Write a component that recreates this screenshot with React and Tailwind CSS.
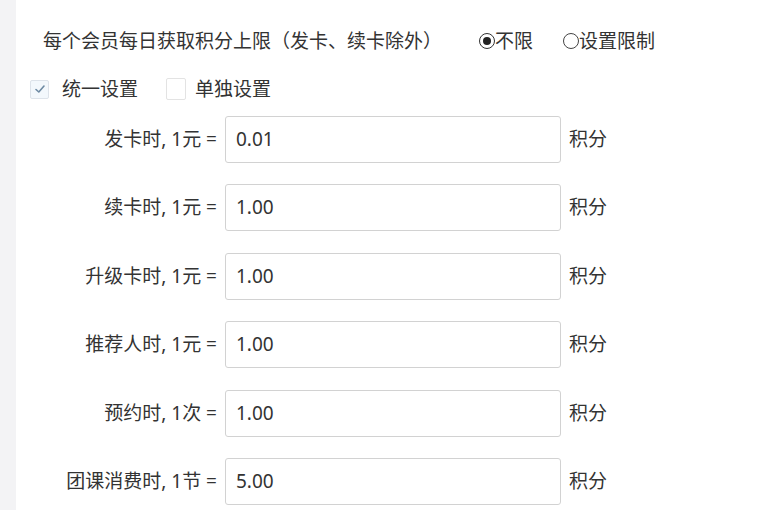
import React from "react";

const rows = [
  ["发卡时, 1元 =", "0.01"],
  ["续卡时, 1元 =", "1.00"],
  ["升级卡时, 1元 =", "1.00"],
  ["推荐人时, 1元 =", "1.00"],
  ["预约时, 1次 =", "1.00"],
  ["团课消费时, 1节 =", "5.00"],
];

export default function App() {
  return (
    <div
      className="flex w-[768px] h-[510px] overflow-hidden bg-white text-[#333] text-[19px] leading-none"
      style={{ fontFamily: '"Noto Sans", "Noto Sans CJK SC", sans-serif' }}
    >
      <div className="w-4 shrink-0 bg-[#f3f3f5]" />
      <div className="flex flex-col pl-[14px]">
        <div className="mt-[29px] h-6 flex items-center ml-[13px] whitespace-nowrap">
          <span className="w-[436px]">每个会员每日获取积分上限（发卡、续卡除外）</span>
          <span className="flex items-center">
            <span className="w-[16px] h-[16px] rounded-full border border-[#333] flex items-center justify-center">
              <span className="w-[8px] h-[8px] rounded-full bg-[#222]" />
            </span>
            不限
          </span>
          <span className="flex items-center ml-[30px]">
            <span className="w-[16px] h-[16px] rounded-full border border-[#444]" />
            设置限制
          </span>
        </div>
        <div className="mt-6 h-6 flex items-center whitespace-nowrap">
          <span className="w-[19px] h-[19px] rounded-[2px] border border-[#dde3ea] bg-[#f3f8fc] flex items-center justify-center">
            <svg width="12" height="12" viewBox="0 0 12 12" fill="none">
              <path d="M2 6.5 L4.8 9 L10 3" stroke="#6d8aa3" strokeWidth="1.6" strokeLinecap="round" strokeLinejoin="round" />
            </svg>
          </span>
          <span className="ml-[13px]">统一设置</span>
          <span className="ml-[28px] w-[20px] h-[22px] rounded-[2px] border border-[#e3e3e3] bg-white" />
          <span className="ml-[9px]">单独设置</span>
        </div>
        <div className="mt-[15px] flex flex-col gap-[21.4px]">
          {rows.map(([label, val]) => (
            <div key={label} className="flex items-center">
              <span className="w-[187px] text-right whitespace-nowrap">{label}</span>
              <div className="ml-[8px] w-[336px] h-[47px] rounded-[3px] border border-[#d2d2d2] flex items-center pl-[10px]">
                {val}
              </div>
              <span className="ml-[8px]">积分</span>
            </div>
          ))}
        </div>
      </div>
    </div>
  );
}
